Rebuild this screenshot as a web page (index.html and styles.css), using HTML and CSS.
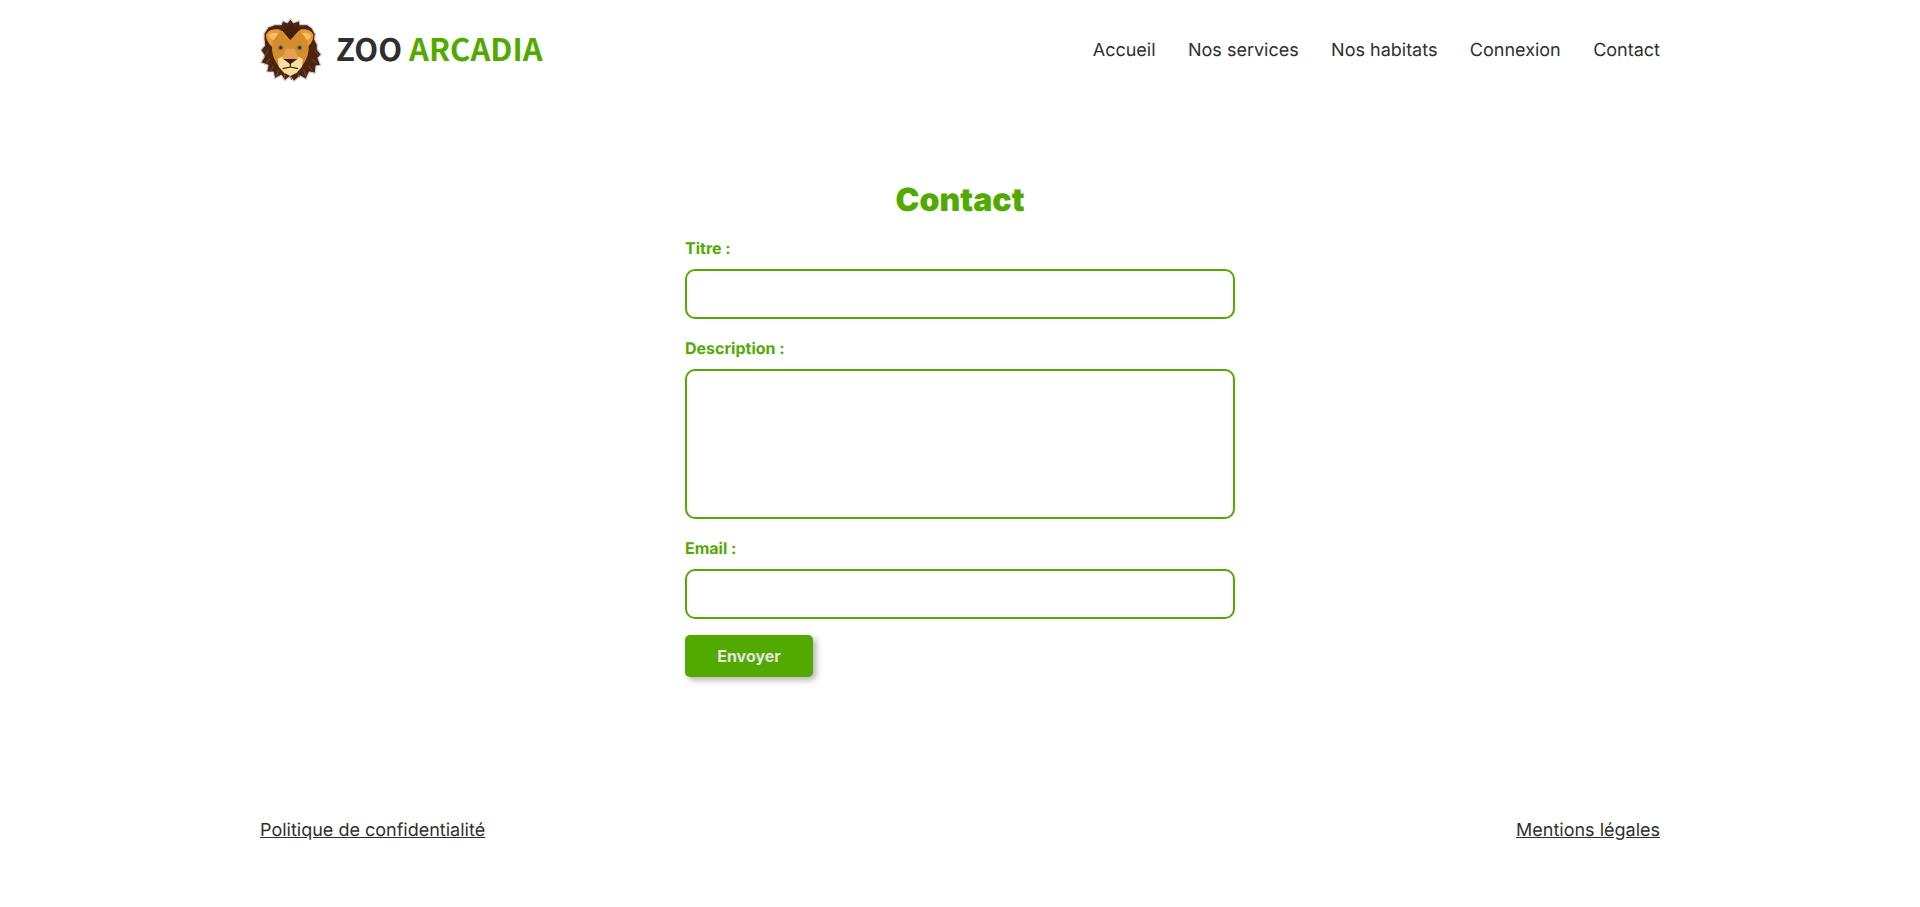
FILE: index.html
```html
<!DOCTYPE html>
<html lang="fr">
  <head>
    <meta charset="utf-8">
    <title>Zoo Arcadia - Contact</title>
    <link rel="stylesheet" href="styles.css">
  </head>
  <body>
    <header class="header">
      <a class="logo" href="#">
        <svg class="logo-img" viewBox="30 24 186 192" width="62" height="64">
          <!-- mane -->
          <path d="M122 26 L130 38 L148 32 L150 44 L172 44 L186 54 L196 72 L194 88 L202 104 L202 118 L214 134 L204 144 L212 166 L198 168 L196 190 L178 186 L168 208 L150 198 L132 214 L120 200 L104 212 L94 196 L74 206 L70 186 L50 186 L54 166 L32 158 L44 138 L32 120 L44 106 L42 88 L42 70 L54 52 L74 44 L94 44 L98 32 L112 38 Z" fill="#4b2511" stroke="#d3cecd" stroke-width="3.5" stroke-linejoin="round"/>
          <path d="M54 122 L42 140 M60 146 L48 160 M70 168 L60 186 M86 178 L80 198 M104 188 L104 206 M194 122 L206 136 M186 146 L200 160 M176 168 L188 184 M160 178 L168 198 M142 188 L148 202 M122 196 L124 210" stroke="#7c4c2c" stroke-width="3" fill="none"/>
          <!-- ears -->
          <path d="M48 76 C50 62 68 56 86 58 L104 68 L92 116 L70 114 C58 104 48 90 48 76 Z" fill="#ea9a30"/>
          <path d="M190 76 C188 62 170 56 154 58 L138 68 L150 116 L170 114 C182 104 190 90 190 76 Z" fill="#ea9a30"/>
          <path d="M56 76 C60 68 74 66 84 70 L84 88 L68 90 C62 86 56 82 56 76 Z" fill="#f6bd68"/>
          <path d="M182 76 C178 68 166 66 156 70 L156 88 L172 90 C178 86 182 82 182 76 Z" fill="#f6bd68"/>
          <!-- face -->
          <path d="M120 86 L146 62 C164 76 176 92 176 114 C176 134 168 152 156 168 L86 168 C74 152 66 134 66 114 C66 92 78 76 96 62 Z" fill="#d78c2c"/>
          <path d="M94 58 C104 54 110 50 122 40 C134 50 140 54 148 60 L121 90 Z" fill="#43200e"/>
          <!-- muzzle -->
          <path d="M84 146 L100 138 L140 138 L158 146 L156 170 L140 188 L121 198 L102 188 L86 170 Z" fill="#f7dfa2"/>
          <path d="M108 116 L134 116 L146 146 L120 154 L96 146 Z" fill="#e6a050"/>
          <path d="M100 147 L142 147 L121 163 Z" fill="#3b1d0c"/>
          <path d="M121 160 L121 172 M98 176 L121 171 L144 176" stroke="#3b1d0c" stroke-width="3.5" fill="none"/>
          <!-- eyes -->
          <circle cx="92" cy="113" r="7.5" fill="#6b7263"/>
          <circle cx="149" cy="113" r="7.5" fill="#6b7263"/>
          <circle cx="92" cy="113" r="3.5" fill="#1d1a16"/>
          <circle cx="149" cy="113" r="3.5" fill="#1d1a16"/>
        </svg>
        <span class="logo-text">ZOO <span class="logo-green">ARCADIA</span></span>
      </a>
      <nav class="nav">
        <a href="#">Accueil</a>
        <a href="#">Nos services</a>
        <a href="#">Nos habitats</a>
        <a href="#">Connexion</a>
        <a href="#">Contact</a>
      </nav>
    </header>

    <main class="main">
      <h1>Contact</h1>
      <form class="contact-form">
        <label for="titre">Titre :</label>
        <input id="titre" type="text">
        <label for="description">Description :</label>
        <textarea id="description"></textarea>
        <label for="email">Email :</label>
        <input id="email" type="email">
        <button type="button">Envoyer</button>
      </form>
    </main>

    <footer class="footer">
      <a href="#">Politique de confidentialité</a>
      <a href="#">Mentions légales</a>
    </footer>
  </body>
</html>
```

FILE: styles.css
```css
* {
  box-sizing: border-box;
}
body {
  margin: 0;
  font-family: Inter, "Liberation Sans", sans-serif;
  color: #2f2f2f;
  background: #fff;
  text-rendering: geometricPrecision;
}
a {
  color: #2f2f2f;
}

.header {
  width: 1400px;
  height: 100px;
  margin: 0 auto;
  display: flex;
  align-items: center;
  justify-content: space-between;
}
.logo {
  display: flex;
  align-items: center;
  gap: 14px;
  text-decoration: none;
}
.logo-text {
  font-family: "Noto Sans CJK SC", "Noto Sans", sans-serif;
  font-weight: 700;
  font-size: 31px;
  line-height: 40px;
  margin-top: -5px;
}
.logo-green {
  color: #52aa00;
}
.nav {
  display: flex;
  gap: 32.4px;
  font-size: 18px;
}
.nav a {
  text-decoration: none;
}

.main {
  width: 550px;
  margin: 80px auto 0;
}
h1 {
  margin: 0;
  height: 40px;
  line-height: 40px;
  text-align: center;
  font-size: 32px;
  font-weight: 900;
  color: #52aa00;
}
.contact-form {
  display: flex;
  flex-direction: column;
  align-items: flex-start;
  margin-top: 16px;
}
label {
  height: 33px;
  line-height: 24px;
  font-size: 16px;
  font-weight: 700;
  color: #52aa00;
}
input, textarea {
  display: block;
  width: 550px;
  height: 50px;
  margin-bottom: 17px;
  border: 2px solid #52aa00;
  border-radius: 10px;
  background: #fff;
  resize: none;
}
textarea {
  height: 150px;
}
button {
  width: 128px;
  height: 42px;
  margin-top: -1px;
  border: none;
  border-radius: 5px;
  background: #52aa00;
  color: #e4e4e4;
  font-family: inherit;
  font-size: 16px;
  font-weight: 700;
  box-shadow: 3px 3px 6px rgba(0, 0, 0, 0.3);
}

.footer {
  width: 1400px;
  margin: 143px auto 0;
  display: flex;
  justify-content: space-between;
  font-size: 18px;
}
```
